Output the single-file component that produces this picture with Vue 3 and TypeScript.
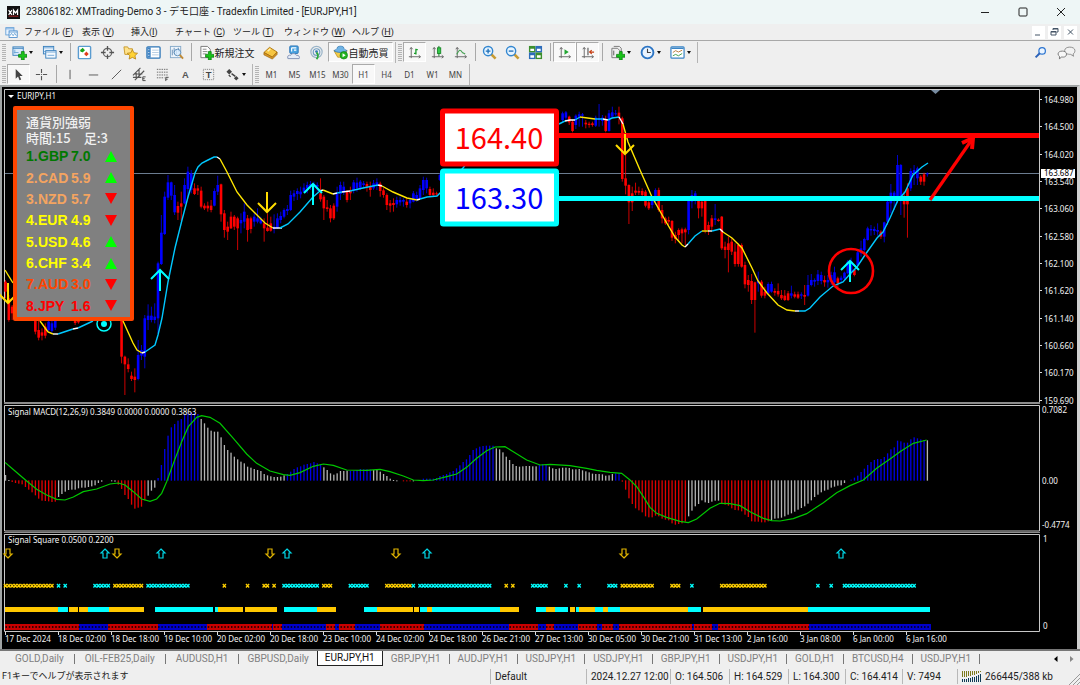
<script setup lang="ts">
interface Tool { icon: string; label: string; text?: string; drop?: boolean; on?: boolean; cls?: string }
interface Candle { x: number; hi: number; top: number; bottom: number; lo: number; color: string }
interface Bar { x: number; y: number; h: number; color: string }

const FIRST_X = 5.5
const STEP = 3.316
const barX = (i: number) => FIRST_X + i * STEP

const menus = [
  { name: 'ファイル (', key: 'F', cls: 'm1' },
  { name: '表示 (', key: 'V', cls: 'm2' },
  { name: '挿入(', key: 'I', cls: 'm3' },
  { name: 'チャート (', key: 'C', cls: 'm1' },
  { name: 'ツール (', key: 'T', cls: 'm5' },
  { name: 'ウィンドウ (', key: 'W', cls: 'm4' },
  { name: 'ヘルプ (', key: 'H', cls: 'm1' },
]

const plus = '<path d="M10 7h3v3h3v3h-3v3h-3v-3H7v-3h3z" fill="#19c419" stroke="#0a7a10" stroke-width=".8"/>'
const axes = '<path d="M4.500 3v11M2 12.500h12M3 4.500l1.500-2 1.500 2M12.500 11l2 1.500-2 1.500" fill="none" stroke="#666" stroke-width="1"/>'
const icons: Record<string, string> = {
  logo: '<rect width="16" height="16" fill="#111"/><path d="M2 5l4 6M6 5l-4 6M8 11V5l2.500 3.500L13 5v6" stroke="#fff" stroke-width="1.500" fill="none"/><path d="M2 12.500h12" stroke="#c22" stroke-width="1"/>',
  app: '<rect x="1" y="2" width="10" height="9" fill="#e8f3ff" stroke="#5b9bd5"/><rect x="5" y="6" width="10" height="8" fill="#fff" stroke="#3c83c8"/><path d="M1 3.500h10M5 7.500h10" stroke="#5b9bd5"/><path d="M6 12l2-3 2 3 2-3 2 3" fill="none" stroke="#5b9bd5"/>',
  newChart: '<rect x="1" y="2" width="11" height="9" fill="#dcecfb" stroke="#3a80bd"/><path d="M1 3.500h11" stroke="#3a80bd"/><path d="M3 5v4M2 8h5" stroke="#6da6d6"/>' + plus,
  profiles: '<rect x="1.500" y="1.500" width="11" height="8" fill="#e4f0fb" stroke="#3a80bd"/><path d="M2 3h10M2 7h9" stroke="#75a9d6"/><rect x="4" y="6" width="11" height="8" fill="#f4f9fe" stroke="#3a80bd"/><path d="M4 7.500h11M6 11h7" stroke="#75a9d6"/>',
  market: '<rect x="1.500" y="1.500" width="13" height="13" rx="1" fill="#fff" stroke="#5a9cd0" stroke-width="1.500"/><path d="M6 3l2.500 2.500L6 8 3.500 5.500z" fill="#1ba31b"/><path d="M10 7l2.500 2.500L10 12 7.500 9.500z" fill="#e23b1a"/><circle cx="5" cy="6" r="1.500" fill="#1ba31b"/>',
  target: '<circle cx="8" cy="8" r="4.500" fill="none" stroke="#666" stroke-width="1.300"/><path d="M8 1v5M8 10v5M1 8h5M10 8h5" stroke="#555" stroke-width="1.400"/>',
  favorite: '<path d="M1 2h4l1 2h4v6H2z" fill="#ffe28a" stroke="#c99a2c"/><path d="M10 5l1.700 3.300 3.800.500-2.800 2.600.8 3.600-3.500-1.800L6.500 15l.8-3.600-2.800-2.600 3.800-.500z" fill="#ffd336" stroke="#b8861b" stroke-width=".9"/>',
  navigator: '<rect x="1" y="2" width="14" height="12" rx="1" fill="#fff" stroke="#2f77b8" stroke-width="1.400"/><rect x="1.500" y="2.500" width="3.500" height="11" fill="#3f83c4"/><path d="M6.500 5.500h7M6.500 8h7M6.500 10.500h7" stroke="#b4cce2"/><path d="M2.500 5h1M2.500 8h1M2.500 11h1" stroke="#fff"/>',
  tester: '<rect x="1.500" y="1.500" width="11" height="12" fill="#edf4fb" stroke="#86a9c9"/><path d="M3.500 11V5M5.500 9V3M8 10V5M10 7V3" stroke="#6a8fb5"/><circle cx="9" cy="8" r="3.500" fill="#d8ecff" fill-opacity=".8" stroke="#5d8db8"/><path d="M11.500 10.500l3.500 4" stroke="#c08a36" stroke-width="2"/>',
  order: '<path d="M2 1.500h7l3 3v9H2z" fill="#fff" stroke="#777"/><path d="M4 4.500h4M4 7h5M4 9.500h4" stroke="#888"/>' + plus,
  gold: '<path d="M1 8l6-5.500 8 5-5 5.500z" fill="#f6c541" stroke="#b07914"/><path d="M1 8v2.500l9 4.500 5-5V7.500L10 13z" fill="#d99722" stroke="#a06a10" stroke-width=".8"/><path d="M5 6.500l3-2.500" stroke="#fff2b8" stroke-width="1.500"/>',
  vps: '<rect x="4" y="1" width="9" height="8" rx="1" fill="#4aa3e0" stroke="#2b74b8"/><path d="M6 3v4M6 3h5M8.500 5.500H11" stroke="#fff" stroke-width="1.200"/><path d="M2 14.500c-1-3 1-4 3-3.500 1-2.500 5-2.500 6 0 3-.5 4 2 3 3.500z" fill="#e6edf7" stroke="#8090b5"/>',
  signal: '<circle cx="8" cy="7.500" r="6" fill="none" stroke="#9ab4c8" stroke-width="1.300"/><circle cx="8" cy="7.500" r="3.500" fill="none" stroke="#6f9fc4" stroke-width="1.300"/><circle cx="8" cy="7" r="1.500" fill="#357ab8"/><path d="M8 8c2 2 2 5 0 7" stroke="#2eaa3c" stroke-width="2" fill="none"/>',
  auto: '<path d="M1 6c2 2 12 2 14 0l-3 7H5z" fill="#f3cd4b" stroke="#b98d1d" stroke-width=".8"/><path d="M1 6c2-1 3-1 4-4 2-1 4-1 6 0 1 3 2 3 4 4-3 2.500-11 2.500-14 0z" fill="#6fb4e6" stroke="#2f78b3" stroke-width=".8"/><circle cx="11.500" cy="11" r="4" fill="#22b422" stroke="#087a08" stroke-width=".6"/><path d="M10.200 8.900l3.300 2.100-3.300 2.100z" fill="#fff"/>',
  bars: axes + '<path d="M9.500 4v6M9.500 5h2M7.500 9h2" stroke="#189b2a" stroke-width="1.400"/>',
  candles: axes + '<path d="M9.500 1v11" stroke="#087a18"/><rect x="8" y="3" width="3.500" height="6" fill="#35c94a" stroke="#087a18" stroke-width=".8"/>',
  line: axes + '<path d="M4 10c3-6 4-5 6-2l3 1.500" fill="none" stroke="#45a052" stroke-width="1.200"/>',
  zoomIn: '<path d="M9.500 9.500l5 5" stroke="#c79b32" stroke-width="2.800"/><circle cx="6.500" cy="6.500" r="4.900" fill="#e6f4ff" stroke="#3286d0" stroke-width="1.500"/><path d="M4 6.500h5M6.500 4v5" stroke="#1d6eb8" stroke-width="1.400"/>',
  zoomOut: '<path d="M9.500 9.500l5 5" stroke="#c79b32" stroke-width="2.800"/><circle cx="6.500" cy="6.500" r="4.900" fill="#e6f4ff" stroke="#3286d0" stroke-width="1.500"/><path d="M4 6.500h5" stroke="#1d6eb8" stroke-width="1.400"/>',
  tile: '<rect x="1" y="1" width="7" height="7" fill="#3c8f2d"/><rect x="8" y="1" width="7" height="7" fill="#2d6cba"/><rect x="1" y="8" width="7" height="7" fill="#2d6cba"/><rect x="8" y="8" width="7" height="7" fill="#3c8f2d"/><path d="M2.500 4h4v2.500h-4zM9.500 4h4v2.500h-4zM2.500 11h4v2.500h-4zM9.500 11h4v2.500h-4z" fill="#fff"/>',
  scroll: axes + '<path d="M8 4.500l4.500 3L8 10.500z" fill="#22a532"/>',
  shift: axes + '<path d="M8.500 3v8" stroke="#555" stroke-width="1.200"/><path d="M15 7.500h-4M12.500 5.500L10.300 7.500l2.200 2" stroke="#c63d12" stroke-width="1.300" fill="none"/>',
  indicators: '<path d="M2 3.500h6l3 3v7H2z" fill="#eee" stroke="#777"/><path d="M4 1.500h6l2 2V9" fill="none" stroke="#777"/><path d="M4 6v5" stroke="#555"/>' + plus,
  clock: '<circle cx="8" cy="8" r="6.300" fill="#eaf4ff" stroke="#2b74c4" stroke-width="2"/><path d="M8 4v4h3.500" stroke="#444" stroke-width="1.200" fill="none"/>',
  template: '<rect x="1" y="2" width="14" height="12" rx="1" fill="#fff" stroke="#3b85c6" stroke-width="1.300"/><path d="M1.500 3.500h13" stroke="#3b85c6" stroke-width="1.500"/><path d="M3 8l3-2 3 1.500L13 5.500" stroke="#b87a3a" fill="none"/><path d="M3 11.500l3-1.500 3 1.500 4-2.500" stroke="#3c9c4a" fill="none"/>',
  cursor: '<path d="M5 2v10.500l2.500-2.300 1.600 4 1.800-.8-1.700-3.700H12.500z" fill="#444"/>',
  cross: '<path d="M8 2v4.500M8 9.500V14M2 8h4.500M9.500 8H14" stroke="#555" stroke-width="1.200"/><path d="M7.500 8h1" stroke="#555"/>',
  vline: '<path d="M7.500 3v10" stroke="#555"/>',
  hline: '<path d="M3 8.500h10" stroke="#555"/>',
  trend: '<path d="M3 13L13 3" stroke="#555"/>',
  channel: '<path d="M1 9L9 1M3 14L13 4M2 7.500h9M1 11h9M4.500 5v8M7.500 3v8" stroke="#555" stroke-width="1.200"/><path d="M14.500 10.500h-3v4h3M11.500 12.500h2" fill="none" stroke="#444"/>',
  fibo: '<path d="M2 2.500h12M2 5.500h12M2 8.500h12M2 11.500h8" stroke="#666" stroke-dasharray="1.500 1"/><path d="M11.500 15v-4h3M11.500 13h2" fill="none" stroke="#444"/>',
  text: '<text x="8" y="12" text-anchor="middle" font-family="Liberation Sans, sans-serif" font-weight="700" font-size="10" fill="#555">A</text>',
  label: '<rect x="2.500" y="2.500" width="11" height="11" fill="none" stroke="#777" stroke-dasharray="1 1"/><text x="8" y="11.500" text-anchor="middle" font-family="Liberation Sans, sans-serif" font-weight="700" font-size="10" fill="#444">T</text>',
  shapes: '<path d="M4.500 2l3 3-3 3-3-3z" fill="#444"/><path d="M7 7l4 3" stroke="#444" stroke-width="1.600"/><path d="M4 8.500l2 2" stroke="#444" stroke-width="1.300"/><path d="M12 9.500l2.500 2.500-2.500 2.500L9.500 12z" fill="#444"/>',
}

const groupA: Tool[] = [
  { icon: 'newChart', label: '新規チャート', drop: true },
  { icon: 'profiles', label: 'プロファイル', drop: true },
]
const groupB: Tool[] = [
  { icon: 'market', label: '気配値表示' },
  { icon: 'target', label: 'データウィンドウ' },
  { icon: 'favorite', label: 'お気に入り' },
  { icon: 'navigator', label: 'ナビゲーター' },
  { icon: 'tester', label: 'ストラテジーテスター' },
]
const groupC: Tool[] = [
  { icon: 'order', label: '新規注文', text: '新規注文', cls: 'wide' },
  { icon: 'gold', label: 'メタエディター' },
  { icon: 'vps', label: 'VPS' },
  { icon: 'signal', label: 'シグナル' },
  { icon: 'auto', label: '自動売買', text: '自動売買', on: true, cls: 'wide' },
]
const groupD: Tool[] = [
  { icon: 'bars', label: 'バーチャート', on: true },
  { icon: 'candles', label: 'ローソク足' },
  { icon: 'line', label: 'ラインチャート' },
]
const groupE: Tool[] = [
  { icon: 'zoomIn', label: '拡大' },
  { icon: 'zoomOut', label: '縮小' },
  { icon: 'tile', label: '整列' },
]
const groupF: Tool[] = [
  { icon: 'scroll', label: '自動スクロール', on: true },
  { icon: 'shift', label: 'チャートシフト', on: true },
]
const groupG: Tool[] = [
  { icon: 'indicators', label: 'インディケータ', drop: true },
  { icon: 'clock', label: '時間足', drop: true },
  { icon: 'template', label: '定型チャート', drop: true },
]
const mainGroups = [groupA, groupB, groupC]
const chartGroups = [groupD, groupE, groupF, groupG]
const pointer: Tool[] = [
  { icon: 'cursor', label: 'カーソル', on: true },
  { icon: 'cross', label: 'クロスヘア' },
]
const drawing: Tool[] = [
  { icon: 'vline', label: '垂直線' },
  { icon: 'hline', label: '水平線' },
  { icon: 'trend', label: 'トレンドライン' },
  { icon: 'channel', label: 'チャネル' },
  { icon: 'fibo', label: 'フィボナッチ' },
  { icon: 'text', label: 'テキスト' },
  { icon: 'label', label: 'ラベル' },
  { icon: 'shapes', label: '矢印', drop: true },
]
const lineGroups = [pointer, drawing]
const periods = ['M1', 'M5', 'M15', 'M30', 'H1', 'H4', 'D1', 'W1', 'MN']

/* high-top-bottom-low of each bar, in thirds of a pixel below the chart's upper edge */
const PRICE_TOP = 85
const runs: [number, string][] = [
  [0, 'r585-590-620-640 r630-640-705-710 r660-665-685-705'],
  [9, 'r690-700-740-748 r700-735-758-766 r730-742-752-766 r715-725-752-760 b700-710-735-742 b705-715-738-746 b690-700-728-735'],
  [21, 'r690-700-714-720 r690-700-712-716'],
  [35, 'r690-700-815-835 r812-815-838-930 r820-838-852-862 r860-872-882-888 r850-875-885-922 b765-810-882-886 b780-795-812-825 b690-700-815-850 b658-692-705-735 b665-692-705-712 b655-695-705-715 b530-535-700-745 b390-443-537-540 b320-335-447-450 b270-292-338-345 b290-292-332-345 b300-330-382-390 r350-363-383-405 r320-355-365-408 b280-300-355-358 b245-260-312-340 b255-265-315-325 r295-310-327-330 r300-310-317-330 r305-317-365-370 r355-362-370-375 r350-362-370-380 r345-362-375-382 b310-318-362-364 b272-300-320-330 r296-298-388-410 r375-385-435-458 r410-425-440-465 r380-395-430-432 r390-395-425-435 r395-400-430-495 b385-405-415-445 b355-380-410-430 r390-400-435-470 r395-400-432-445 b385-395-410-425 b370-400-410-415 b395-402-415-418 r400-415-430-470 r385-428-438-440'],
  [80, 'r395-415-437-440 b388-425-432-445 b385-400-430-432 b380-393-405-415 b370-375-395-400 b360-372-378-390 b317-330-375-378 b315-325-335-348 b310-318-327-345 b305-320-328-340 b295-308-320-322 b290-300-310-325 b288-297-305-315 b290-297-302-330 b292-300-305-320 r280-325-343-350 r330-335-370-405 r345-367-372-380 r360-370-400-412 r355-362-400-405 b305-325-365-380 b290-300-327-345 b290-305-322-330 r315-320-345-352 r305-318-325-345 b285-292-315-325 b278-293-310-320 b285-290-308-315 b288-295-300-310 r290-297-305-320 r290-305-315-335 b285-295-310-315 b280-292-303-315 r290-296-318-335 r310-316-330-338 r325-330-360-375 r345-355-362-382 r340-354-360-380 b335-345-358-368 b335-345-352-362 b340-345-350-365 r340-350-360-368 b338-345-355-370 b318-325-350-352 b320-330-345-350 b300-310-340-342 b275-285-315-330 b278-285-310-325 r305-312-330-335 r310-323-330-335 r320-325-328-332 b265-270-285-288'],
  [168, 'b80-85-105-110 b78-82-98-108 r92-95-112-120 r105-110-138-142 b88-92-120-132 b80-88-95-125 b84-88-92-125 r105-113-118-130 r110-116-120-128 r110-115-120-125 b92-98-122-126 b57-100-105-125 b90-98-108-122 r92-105-138-142 b75-85-138-140 b65-82-95-100 b75-85-88-92 r65-83-98-118 r95-100-282-290 r210-280-302-328 r298-300-352-417 r305-325-352-378 r293-317-323-330 r305-318-323-330 r310-318-330-335 r315-320-362-367 r345-352-370-375 b342-345-360-370 b310-315-345-360 r308-315-375-380 r360-375-400-415 r395-400-415-420 r395-405-410-420 r405-408-458-468 r440-450-462-475 r430-435-450-470 r428-433-445-475 r428-433-442-480 b340-345-435-448 b315-330-350-370 b318-325-335-358 r340-345-370-400 r345-350-370-395 r345-348-435-445 r410-420-435-450 r390-400-425-435 b357-400-405-420 r400-404-408-410 r393-395-490-495 r470-485-495-520 r455-475-495-562 r460-470-500-510 r475-500-537-545 r475-480-537-545 r475-480-545-548 r530-540-598-610 r570-585-600-620 r567-588-645-657 r590-592-645-743 b560-588-595-620 r585-590-632-638 r605-620-632-640 b592-597-625-628 b590-597-620-623 r610-618-623-632 r595-618-628-635 r615-630-640-645 r615-632-645-648 r618-625-645-648 b602-625-632-640 r620-628-635-640 r620-628-638-642 b622-628-632-642 r600-630-635-660 b570-600-632-635 b567-585-600-604 b580-585-590-605 b555-568-588-600 b560-570-588-598 r572-585-592-605 b570-585-592-608 b560-570-590-600 b545-562-592-605 r575-580-595-610 b572-578-585-592 b560-563-580-584 b525-530-565-568 b518-530-560-570 r550-555-570-574 b498-502-540-544 b467-490-505-515 b458-462-495-500 b425-430-465-467 b420-432-436-452 b425-432-438-450 b415-435-440-452 r436-440-455-462 b410-412-455-472 b340-350-410-420 b297-323-355-385 b318-323-345-375 b210-240-345-355 b237-240-340-390 r320-345-358-398 r295-310-358-458 b250-258-310-318 b240-255-265-300 b245-250-280-300 r270-275-290-300 r263-268-290-302 b262-265-268-275'],
]
const candles: Candle[] = runs.flatMap(([start, row]) =>
  row.split(' ').map((token, k) => {
    const [hi, top, bottom, lo] = token.slice(1).split('-').map((v) => PRICE_TOP + Number(v) / 3)
    return { x: barX(start + k), hi, top, bottom, lo, color: token[0] === 'r' ? '#ff0000' : '#0000ff' }
  }),
)

const Y = '#ffe600'
const C = '#00c8ff'
const W = '#ffffff'
const average: { c: string; p: string }[] = [
  { c: Y, p: '5,270 13,283' },
  { c: Y, p: '40,321 48,332 53,334' },
  { c: W, p: '53,334 58,334' },
  { c: C, p: '58,334 67,331 73,329' },
  { c: W, p: '73,329 78,328' },
  { c: C, p: '78,328 93,321' },
  { c: Y, p: '123,321 133,343 137,350 142,353' },
  { c: W, p: '142,353 145,352' },
  { c: C, p: '145,352 155,345 158,335 162,318 168,282 175,248 182,220 188,197 195,173 198,167 202,163 208,160 214,157 217,157' },
  { c: W, p: '217,157 220,159' },
  { c: Y, p: '220,159 227,172 237,192 247,205 257,215 265,223 273,228' },
  { c: W, p: '273,228 282,228' },
  { c: C, p: '280,228 288,224 300,212 313,197 320,191' },
  { c: W, p: '320,191 323,190' },
  { c: Y, p: '323,190 333,194' },
  { c: W, p: '333,194 337,193' },
  { c: C, p: '337,193 342,192' },
  { c: W, p: '342,192 350,191' },
  { c: C, p: '350,191 363,188 378,185' },
  { c: W, p: '378,185 382,186' },
  { c: Y, p: '382,186 393,192 407,198 417,200' },
  { c: W, p: '417,200 420,199' },
  { c: C, p: '420,199 427,197 437,196 440,193 463,168 466,164' },
  { c: C, p: '559,124 565,121' },
  { c: W, p: '565,121 570,120 575,120' },
  { c: C, p: '575,120 580,117' },
  { c: Y, p: '580,117 595,119' },
  { c: C, p: '595,119 603,119' },
  { c: W, p: '603,119 608,120' },
  { c: C, p: '608,120 612,118 619,117' },
  { c: W, p: '619,117 623,124' },
  { c: Y, p: '623,124 628,142 640,170 652,197 665,220 675,237 682,245 685,247' },
  { c: W, p: '685,247 688,244' },
  { c: C, p: '688,244 695,236 702,231' },
  { c: Y, p: '702,231 708,231' },
  { c: W, p: '708,231 712,231' },
  { c: C, p: '712,231 720,229' },
  { c: W, p: '720,229 723,232' },
  { c: Y, p: '723,232 732,238 742,248 752,268 758,281 767,293 778,305 787,310 795,311' },
  { c: W, p: '795,311 799,311' },
  { c: C, p: '799,311 805,311 810,308 820,297 833,286 843,282 850,274 857,267 865,255 877,238 883,232 890,218 898,200 905,192 913,175 922,167 928,163' },
]
const signals = [
  { x: 8, y: 303, up: false },
  { x: 160, y: 270, up: true },
  { x: 267, y: 212, up: false },
  { x: 313, y: 184, up: true },
  { x: 625, y: 154, up: false },
  { x: 850, y: 261, up: true },
]
const prices = ['164.980', '164.500', '164.020', '163.540', '163.060', '162.580', '162.100', '161.620', '161.140', '160.660', '160.170', '159.690']
const priceY = (i: number) => 100 + Math.round(i * 27.32)

const strength = [
  { n: '1.', cur: 'GBP', v: '7.0', up: true, cls: 'green' },
  { n: '2.', cur: 'CAD', v: '5.9', up: true, cls: 'sand' },
  { n: '3.', cur: 'NZD', v: '5.7', up: false, cls: 'sand' },
  { n: '4.', cur: 'EUR', v: '4.9', up: false, cls: 'yellow' },
  { n: '5.', cur: 'USD', v: '4.6', up: true, cls: 'yellow' },
  { n: '6.', cur: 'CHF', v: '3.4', up: true, cls: 'yellow' },
  { n: '7.', cur: 'AUD', v: '3.0', up: false, cls: 'orange' },
  { n: '8.', cur: 'JPY', v: '1.6', up: false, cls: 'red' },
]

/* end of each histogram bar, in thirds of a pixel; 242 is the zero level */
const macd = 'g225 g240 r247 r250 r252 r254 r262 r270 r278 r287 r297 r303 r304 r305 r307 r306 g292 g283 g276 g271 g270 g270 g266 g264 g264 g262 g260 g257 g250 g246 n n g243 g246 r255 r268 r286 r298 r315 r327 r324 r321 r302 g288 g273 g264 b234 b195 b147 b107 b82 b72 b62 b57 b45 b40 b38 b38 b42 g57 g70 g83 g92 g95 g95 g112 g135 g150 g158 g170 g178 g185 g190 g200 g203 g207 g210 g213 g222 g226 g229 g231 g231 g230 g226 b222 b215 b207 b202 b199 b194 b192 b190 b186 b190 b195 g202 g210 g220 g224 g220 g213 g213 g212 b213 b212 b210 b207 b208 b208 b209 g210 g210 g215 g222 g228 g236 g240 g242 n r245 r245 r245 g243 n n b236 b236 b236 b236 b234 b228 b225 b222 b217 b213 b205 b196 b186 b178 b165 b150 b145 b140 b138 b137 b137 b137 g145 g148 g157 g170 g180 g192 g198 g200 g199 g198 g198 g199 g199 b195 b193 b192 g200 g205 g207 g205 g203 g203 g204 g208 g208 g207 g211 g214 g217 g221 g222 g222 g223 g227 g226 g222 b220 b220 r246 r270 r296 r313 r326 r332 r338 r350 r353 r353 r348 r350 r357 r360 r362 r371 r375 r373 r371 r366 g350 g333 g320 g313 g302 g308 g310 g306 g303 g303 r313 r315 r318 r326 r331 r332 r335 r345 r352 r365 r366 r366 r368 r368 r365 g362 g357 g356 g354 g350 g345 g341 g336 g330 g325 g320 g312 g302 g292 g285 g278 g273 g270 g264 g261 g258 g257 g250 n b239 b233 b227 b216 b206 b195 b186 b180 b177 b177 b171 b160 b148 b142 b122 b124 b128 b128 b118 b112 b115 b118 b120 g121'
const shade: Record<string, string> = { r: '#e00000', g: '#b4b4b4', b: '#0000e6' }
const histogram: Bar[] = macd.split(' ').flatMap((token, i) => {
  if (token === 'n') return []
  const end = Number(token.slice(1))
  return [{ x: barX(i), y: 400 + Math.min(end, 241) / 3, h: Math.max(Math.abs(end - 242) / 3, 1), color: shade[token[0]] }]
})
const macdLine = '15,187 45,213 80,243 110,268 140,285 170,298 195,300 220,291 250,275 290,267 330,252 355,249 375,255 400,275 425,297 450,304 470,297 485,280 500,245 520,190 545,125 565,80 590,52 605,47 630,52 660,70 700,115 740,162 770,190 810,213 850,224 870,226 900,218 940,199 970,192 1000,196 1040,210 1100,211 1140,208 1170,215 1210,228 1240,240 1270,242 1300,240 1340,230 1370,222 1400,202 1430,175 1460,152 1485,141 1515,140 1540,155 1580,180 1620,195 1650,193 1710,197 1760,205 1790,211 1830,217 1865,220 1890,240 1910,260 1930,290 1950,322 1970,340 2000,352 2040,364 2065,368 2090,357 2130,325 2160,310 2190,311 2220,317 2250,335 2290,355 2315,362 2340,363 2380,356 2420,341 2470,308 2510,278 2550,257 2590,240 2630,205 2670,177 2700,155 2740,130 2780,120'

const squareArrows = [
  { x: 8, up: false }, { x: 105, up: true }, { x: 117, up: false }, { x: 161, up: true }, { x: 270, up: false },
  { x: 287, up: true }, { x: 396, up: false }, { x: 427, up: true }, { x: 624, up: false }, { x: 841, up: true },
]
const markRuns: [string, number, number][] = [
  ['y', 6, 52], ['c', 58, 58], ['c', 64, 64], ['c', 94, 108], ['y', 114, 141], ['c', 147, 187], ['y', 224, 224], ['y', 247, 247],
  ['y', 263, 267], ['y', 273, 273], ['c', 283, 317], ['y', 323, 331], ['c', 350, 367], ['y', 386, 409], ['c', 413, 413], ['c', 419, 489],
  ['y', 506, 506], ['y', 512, 512], ['c', 532, 546], ['c', 565, 565], ['c', 579, 579], ['c', 608, 616], ['y', 622, 652], ['y', 671, 679],
  ['c', 691, 691], ['y', 722, 765], ['c', 817, 817], ['c', 830, 830], ['c', 844, 914],
]
const paint: Record<string, string> = { y: '#ffd000', c: '#00ffff' }
const marks = markRuns.flatMap(([c, a, b]) => {
  const first = Math.round((a - FIRST_X) / STEP)
  const last = Math.round((b - FIRST_X) / STEP)
  return Array.from({ length: last - first + 1 }, (_, k) => ({ x: barX(first + k), color: paint[c] }))
})
const bands: [string, number, number][] = [
  ['y', 5, 58], ['c', 58, 68], ['y', 69, 78], ['y', 79, 88], ['c', 88, 109], ['y', 109, 144], ['c', 155, 213], ['c', 215, 218], ['y', 218, 243],
  ['y', 245, 277], ['c', 284, 317], ['y', 317, 336], ['c', 364, 377], ['y', 377, 413], ['y', 414, 419], ['c', 420, 427], ['y', 427, 432],
  ['c', 432, 500], ['y', 500, 519], ['c', 536, 546], ['y', 546, 555], ['c', 555, 568], ['y', 570, 575], ['c', 576, 579], ['y', 579, 595],
  ['c', 595, 603], ['y', 603, 608], ['c', 608, 620], ['y', 620, 688], ['c', 688, 701], ['y', 703, 808], ['c', 808, 930],
]
const redRuns: [number, number][] = [
  [5, 79], [108, 158], [207, 272], [273, 282], [326, 335], [339, 355], [380, 424], [509, 538], [546, 554], [578, 597], [602, 613], [619, 692], [694, 712], [718, 809],
]
const times = ['17 Dec 2024', '18 Dec 02:00', '18 Dec 18:00', '19 Dec 10:00', '20 Dec 02:00', '20 Dec 18:00', '23 Dec 10:00', '24 Dec 02:00', '24 Dec 18:00', '26 Dec 21:00', '27 Dec 13:00', '30 Dec 05:00', '30 Dec 21:00', '31 Dec 13:00', '2 Jan 16:00', '3 Jan 08:00', '6 Jan 00:00', '6 Jan 16:00']
const timeX = (i: number) => 5 + i * 53

const tabs = ['GOLD,Daily', 'OIL-FEB25,Daily', 'AUDUSD,H1', 'GBPUSD,Daily', 'EURJPY,H1', 'GBPJPY,H1', 'AUDJPY,H1', 'USDJPY,H1', 'USDJPY,H1', 'GBPJPY,H1', 'USDJPY,H1', 'GOLD,H1', 'BTCUSD,H4', 'USDJPY,H1']
const status = [
  { t: 'Default', cls: 's1' },
  { t: '2024.12.27 12:00', cls: 's2' },
  { t: 'O: 164.506', cls: 's3' },
  { t: 'H: 164.529', cls: 's3' },
  { t: 'L: 164.300', cls: 's4' },
  { t: 'C: 164.414', cls: 's4' },
  { t: 'V: 7494', cls: 's5' },
]
</script>

<template>
  <div class="terminal">
    <header class="title">
      <svg class="logo" viewBox="0 0 16 16" v-html="icons.logo"></svg>
      <h1>23806182: XMTrading-Demo 3 - デモ口座 - Tradexfin Limited - [EURJPY,H1]</h1>
      <button class="win" aria-label="最小化"><svg viewBox="0 0 10 10"><path d="M1 5.500h8" /></svg></button>
      <button class="win" aria-label="最大化"><svg viewBox="0 0 10 10"><rect x="1" y="1" width="8" height="8" rx="1" /></svg></button>
      <button class="win" aria-label="閉じる"><svg viewBox="0 0 10 10"><path d="M1 1l8 8M9 1L1 9" /></svg></button>
    </header>

    <nav class="menu">
      <svg class="app-icon" viewBox="0 0 16 16" v-html="icons.app"></svg>
      <button v-for="m in menus" :key="m.key" :class="m.cls">{{ m.name }}<u>{{ m.key }}</u>)</button>
      <span class="grow"></span>
      <button class="mdi" aria-label="子ウィンドウを最小化"><svg viewBox="0 0 12 12"><path d="M3 9h5" /></svg></button>
      <button class="mdi" aria-label="子ウィンドウを元に戻す"><svg viewBox="0 0 12 12"><path d="M5 4V2.500h5V6H8.500M3 5.500h5V9H3zM3 6h5M5 3h5" /></svg></button>
      <button class="mdi" aria-label="子ウィンドウを閉じる"><svg viewBox="0 0 12 12"><path d="M4 3.500l5 5M9 3.500l-5 5" /></svg></button>
    </nav>

    <div class="toolbar">
      <i class="grip"></i>
      <template v-for="(g, gi) in mainGroups" :key="gi">
        <i v-if="gi" class="sep"></i>
        <button v-for="t in g" :key="t.icon" class="tool" :class="[t.cls, { on: t.on, drop: t.drop }]" :aria-label="t.label">
          <svg viewBox="0 0 16 16" v-html="icons[t.icon]"></svg>
          <span v-if="t.text">{{ t.text }}</span>
          <i v-if="t.drop" class="caret"></i>
        </button>
      </template>
      <i class="edge"></i>
      <i class="grip"></i>
      <template v-for="(g, gi) in chartGroups" :key="gi">
        <i v-if="gi" class="sep"></i>
        <button v-for="t in g" :key="t.icon" class="tool" :class="{ on: t.on, drop: t.drop }" :aria-label="t.label">
          <svg viewBox="0 0 16 16" v-html="icons[t.icon]"></svg>
          <i v-if="t.drop" class="caret"></i>
        </button>
      </template>
      <i class="edge"></i>
      <span class="grow"></span>
      <button class="tool find" aria-label="検索">
        <svg viewBox="0 0 16 16"><circle cx="10" cy="6" r="4" fill="#eaf4ff" stroke="#2b74d0" stroke-width="1.500" /><path d="M7 9l-5 5" stroke="#2b62b8" stroke-width="2.400" /></svg>
      </button>
      <button class="tool chat" aria-label="チャット">
        <svg viewBox="0 0 20 16"><path d="M8 6c0-5 11-5 11 0 0 2-1 3-2 3.500l.500 2.500-3-2C11 10 8 9 8 6z" fill="#f2f2f2" stroke="#8a8a8a" /><path d="M1 9.500c0-4 9-4 9 0s-4 3.500-5.500 3.200L2.500 15V12C1.500 11.500 1 10.500 1 9.500z" fill="#f8f8f8" stroke="#777" /></svg>
      </button>
    </div>

    <div class="toolbar">
      <i class="grip"></i>
      <template v-for="(g, gi) in lineGroups" :key="gi">
        <i v-if="gi" class="sep"></i>
        <button v-for="t in g" :key="t.icon" class="tool" :class="{ on: t.on, drop: t.drop }" :aria-label="t.label">
          <svg viewBox="0 0 16 16" v-html="icons[t.icon]"></svg>
          <i v-if="t.drop" class="caret"></i>
        </button>
      </template>
      <i class="edge"></i>
      <i class="grip"></i>
      <button v-for="p in periods" :key="p" class="tool period" :class="{ on: p === 'H1' }">{{ p }}</button>
      <i class="edge"></i>
    </div>

    <main class="chart">
      <svg class="pane" viewBox="2 87 1075 316">
        <path d="M4.500 402V89.500H1039.500V402" class="frame" />
        <path d="M4 402.500H1040" stroke="#8c8c8c" />
        <path d="M931 90h9l-4.500 4z" fill="#778ba0" />
        <path d="M5 173.500H1039" stroke="#6b7c90" />
        <g v-for="(c, i) in candles" :key="i" :fill="c.color">
          <rect :x="c.x - 0.5" :y="c.hi" width="1" :height="c.lo - c.hi" opacity=".8" />
          <rect :x="c.x - 1.3" :y="c.top" width="2.6" :height="Math.max(c.bottom - c.top, 1)" />
        </g>
        <polyline v-for="(s, i) in average" :key="'a' + i" :points="s.p" :stroke="s.c" class="average" />
        <g class="level">
          <path d="M558 135.500H1039" stroke="#ff0000" />
          <path d="M558 198.500H1039" stroke="#00ffff" />
        </g>
        <g v-for="(s, i) in signals" :key="'s' + i" class="signal" :stroke="s.up ? '#00ffff' : '#ffdc00'">
          <path v-if="s.up" :d="`M${s.x} ${s.y + 21}V${s.y}m-9 9l9-9 9 9`" />
          <path v-else :d="`M${s.x} ${s.y - 20}V${s.y}m-9-9l9 9 9-9`" />
        </g>
        <circle cx="104" cy="324" r="7" fill="none" stroke="#00ffff" stroke-width="1.500" />
        <circle cx="104" cy="324" r="3" fill="#00ffff" />
        <g class="tag">
          <rect x="442.500" y="111" width="114" height="53" rx="1" fill="#fff" stroke="#ff0000" />
          <text x="499" y="149" fill="#ff0000">164.40</text>
          <rect x="442.500" y="171" width="114" height="53" rx="1" fill="#fff" stroke="#00ffff" />
          <text x="499" y="209" fill="#0000ff">163.30</text>
        </g>
        <path d="M930 200L973 138" stroke="#ff0000" stroke-width="3.200" />
        <path d="M962 143l11-5-1 11" fill="none" stroke="#ff0000" stroke-width="4" />
        <circle cx="851" cy="271" r="22" fill="none" stroke="#ff0000" stroke-width="2.600" />
        <path d="M8 95h6l-3 3z" fill="#fff" />
        <text x="17" y="99" class="small">EURJPY,H1</text>
        <g v-for="(p, i) in prices" :key="p">
          <path :d="`M1040 ${priceY(i) - 0.5}h2`" stroke="#ddd" />
          <text x="1044" :y="priceY(i) + 3" class="small">{{ p }}</text>
        </g>
        <rect x="1041" y="169" width="34" height="9" fill="#fff" />
        <text x="1044" y="176" class="small dark">163.687</text>
      </svg>

      <svg class="pane" viewBox="2 403 1075 129">
        <path d="M4 403.500H1040" stroke="#8c8c8c" />
        <path d="M4.500 531V405.500H1039.500V531z" class="frame" />
        <rect v-for="(b, i) in histogram" :key="i" :x="b.x - 0.6" :y="b.y" width="1.3" :height="b.h" :fill="b.color" />
        <polyline :points="macdLine" transform="translate(0 400) scale(.33333)" fill="none" stroke="#00c800" stroke-width="3.600" />
        <text x="8" y="415" class="small">Signal MACD(12,26,9) 0.3849 0.0000 0.0000 0.3863</text>
        <text x="1042" y="413" class="small">0.7082</text>
        <text x="1042" y="484" class="small">0.00</text>
        <text x="1042" y="528" class="small">-0.4774</text>
      </svg>

      <svg class="pane" viewBox="2 532 1075 117">
        <path d="M4 532.500H1040" stroke="#8c8c8c" />
        <path d="M4.500 631.500V534.500H1039.500V631.500z" class="frame" />
        <text x="8" y="543" class="small">Signal Square 0.0500 0.2200</text>
        <g v-for="(a, i) in squareArrows" :key="i" fill="none" stroke-width="1.200" :stroke="a.up ? '#00d8e8' : '#e0b400'">
          <path v-if="a.up" :d="`M${a.x} 549l4 4h-2v5h-4v-5h-2z`" />
          <path v-else :d="`M${a.x} 558l4-4h-2v-5h-4v5h-2z`" />
        </g>
        <path v-for="(m, i) in marks" :key="'m' + i" :d="`M${m.x - 1.6} 584l3.200 3.500m0-3.500l-3.200 3.500`" :stroke="m.color" stroke-width="1.300" />
        <rect v-for="(b, i) in bands" :key="'b' + i" :x="b[1]" y="607" :width="b[2] - b[1]" height="5" :fill="b[0] === 'y' ? '#ffc800' : '#00ffff'" />
        <rect x="5" y="624" width="926" height="6" fill="#0000c8" />
        <rect v-for="(r, i) in redRuns" :key="'r' + i" :x="r[0]" y="624" :width="r[1] - r[0]" height="6" fill="#c80000" />
        <path d="M5.500 627H930" stroke="#000" stroke-width="1.600" stroke-dasharray="1.500 1.816" />
        <g v-for="(t, i) in times" :key="t">
          <path :d="`M${timeX(i) + 0.5} 632v3`" stroke="#ddd" />
          <text :x="timeX(i)" y="642" class="small">{{ t }}</text>
        </g>
        <text x="1043" y="542" class="small">1</text>
        <text x="1043" y="629" class="small">0</text>
      </svg>

      <section class="strength">
        <p>通貨別強弱</p>
        <p>時間:15　足:3</p>
        <ul>
          <li v-for="s in strength" :key="s.cur" :class="s.cls">
            <span>{{ s.n }}</span><span>{{ s.cur }}</span><span>{{ s.v }}</span>
            <svg viewBox="0 0 12 12"><path v-if="s.up" d="M6 0l6 11H0z" fill="#00ff00" /><path v-else d="M6 11L0 0h12z" fill="#ff0000" /></svg>
          </li>
        </ul>
      </section>
    </main>

    <nav class="tabs">
      <button v-for="(t, i) in tabs" :key="i" :class="{ active: i === 4, before: i === 3 }">{{ t }}</button>
      <span class="grow"></span>
      <button class="scroll" aria-label="前へ"><svg viewBox="0 0 6 6"><path d="M4.500 0v6L1 3z" fill="#000" /></svg></button>
      <button class="scroll" aria-label="次へ"><svg viewBox="0 0 6 6"><path d="M1 0v6l3.500-3z" fill="#888" /></svg></button>
    </nav>

    <footer class="status">
      <span class="help">F1キーでヘルプが表示されます</span>
      <span v-for="s in status" :key="s.t" class="cell" :class="s.cls">{{ s.t }}</span>
      <span class="cell traffic">
        <svg viewBox="0 0 19 11"><path d="M.500 0v6M2.500 0v6M4.500 0v6M6.500 0v5M8.500 0v5M10.500 0v4M12.500 0v4M14.500 0v3M16.500 0v2M18.500 0v1" stroke="#7d7a1c" /><path d="M.500 8v3M2.500 8v3M4.500 8v3M6.500 7v4M8.500 7v4M10.500 6v5M12.500 6v5M14.500 5v6M16.500 4v7M18.500 3v8" stroke="#0d3a55" /></svg>
        266445/388 kb
      </span>
      <svg class="resize" viewBox="0 0 12 12"><path d="M12 1L1 12M12 5l-7 7M12 9l-3 3" stroke="#999" /></svg>
    </footer>
  </div>
</template>

<style>
html, body { margin: 0; background: #efefef; }
</style>

<style scoped>
.terminal {
  display: flex;
  flex-direction: column;
  min-height: 100vh;
  background: #efefef;
  color: #222;
  font-family: Roboto, "Noto Sans CJK JP", sans-serif;
  font-size: 10px;
  overflow: hidden;
}
button { font: inherit; color: inherit; border: 0; padding: 0; margin: 0; background: none; }
svg { display: block; flex: none; }
.grow { flex: 1; }

.title { display: flex; align-items: center; height: 24px; background: #eef6f6; }
.logo { width: 13px; height: 13px; margin-left: 7px; }
.title h1 { flex: 1; margin: 0 0 0 6px; font-size: 10px; line-height: 22px; font-weight: 400; white-space: nowrap; }
.win { display: grid; place-items: center; width: 38px; height: 22px; }
.win svg { width: 10px; height: 10px; fill: none; stroke: #222; }

.menu { display: flex; align-items: center; height: 16px; border-bottom: 1px solid #a8a8a8; font-size: 9px; line-height: 15px; white-space: nowrap; }
.app-icon { width: 13px; height: 13px; margin: 0 6px 0 5px; }
.menu button { text-align: left; }
.m1 { width: 58px; }
.m2 { width: 49px; }
.m3 { width: 44px; }
.m4 { width: 68px; }
.m5 { width: 51px; }
.menu .mdi { width: 13px; height: 13px; margin-right: 3px; background: #fff; }
.mdi svg { width: 12px; height: 12px; fill: none; stroke: #456; }

.toolbar { display: flex; align-items: center; height: 22px; }
.grip { width: 4px; height: 17px; margin: 0 1px 0 2px; background: repeating-linear-gradient(#b4b4b4 0 1px, #efefef 1px 2px); }
.sep { width: 1px; height: 18px; margin: 0 2px 0 3px; background: #a8a8a8; }
.edge { width: 1px; height: 21px; margin: 0 0 0 2px; background: #b4b4b4; }
.tool { display: flex; align-items: center; justify-content: center; width: 23px; height: 20px; box-sizing: border-box; border: 1px solid transparent; }
.tool svg { width: 15px; height: 15px; }
.tool.on { background: #f8f8f8; border-color: #aaa #fff #fff #aaa; }
.tool.drop { width: 30px; gap: 2px; }
.tool.wide { width: 65px; gap: 1px; white-space: nowrap; }
.caret { border: 2px solid transparent; border-top: 3px solid #111; border-bottom: 0; }
.period { font-family: "Noto Sans", sans-serif; font-size: 8px; color: #444; }
.find { width: 24px; }
.find svg { width: 13px; height: 13px; }
.chat { width: 28px; }
.chat svg { width: 19px; height: 15px; }

.chart { position: relative; background: #000; border: solid #a0a4a4; border-width: 2px 3px 0 2px; border-right-color: #d0d0d0; }
.pane { width: 100%; height: auto; overflow: visible; }
.frame { fill: none; stroke: #c8c8c8; }
.average { fill: none; stroke-width: 1.4px; }
.level { stroke-width: 5px; }
.signal { fill: none; stroke-width: 2px; }
.tag rect { stroke-width: 5px; }
.tag text { font-family: "Noto Sans CJK JP", sans-serif; font-size: 29px; text-anchor: middle; }
.small { fill: #f4f4f4; font-family: "Noto Sans", sans-serif; font-size: 8px; }
.small.dark { fill: #000; }

.strength {
  position: absolute;
  left: 11px;
  top: 19px;
  width: 121px;
  height: 215px;
  box-sizing: border-box;
  display: flex;
  flex-direction: column;
  padding: 4px 13px 0 9px;
  border: 4px solid #ff4500;
  border-radius: 2px;
  background: #808080;
  font: 700 14px/17px "Liberation Sans", "Noto Sans CJK JP", sans-serif;
}
.strength p { margin: 0; color: #f0f0f0; font-size: 13px; line-height: 16px; font-weight: 500; font-family: "Noto Sans CJK JP", sans-serif; white-space: nowrap; }
.strength ul { flex: 1; display: flex; flex-direction: column; margin: 0; padding: 0; list-style: none; }
.strength li { flex: 1; display: grid; grid-template-columns: 12px 33px 1fr 12px; align-items: center; }
.strength svg { width: 12px; height: 12px; }
.green { color: #007800; }
.sand { color: #f4a460; }
.yellow { color: #ffff00; }
.orange { color: #ff4500; }
.red { color: #ff0000; }

.tabs { display: flex; align-items: center; height: 19px; padding: 0 0 2px 5px; box-sizing: border-box; border-top: 2px solid #777; color: #808080; white-space: nowrap; }
.tabs button { height: 10px; padding: 0 8px; line-height: 10px; border-right: 1px solid #777; }
.tabs button:nth-child(-n + 3) { padding: 0 10px; }
.tabs button.before { border-right: 0; }
.tabs button.active { height: 15px; align-self: flex-start; padding: 0 7px; border: 1px solid #222; border-width: 0 1px 1px; background: #fff; color: #111; }
.tabs button.scroll { padding: 0 5px; border: 0; }
.scroll svg { width: 6px; height: 6px; }

.status { display: flex; align-items: center; height: 17px; line-height: 15px; white-space: nowrap; position: relative; }
.help { flex: 1; padding-left: 2px; font-size: 9px; }
.cell { box-sizing: border-box; padding-left: 4px; border-left: 1px solid #b8b8b8; font-size: 10px; }
.s1 { width: 96px; }
.s2 { width: 84px; }
.s3 { width: 59px; }
.s4 { width: 57px; }
.s5 { width: 55px; }
.traffic { display: flex; align-items: center; gap: 4px; width: 123px; }
.traffic svg { width: 19px; height: 11px; }
.resize { position: absolute; right: 0; bottom: 0; width: 12px; height: 12px; }
</style>
